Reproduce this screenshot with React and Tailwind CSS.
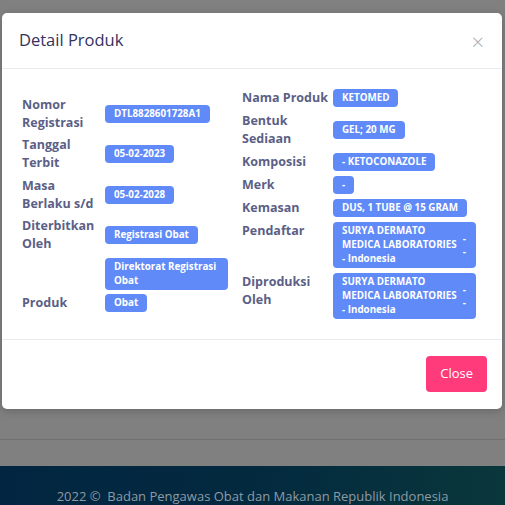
import React from "react";

const font = { fontFamily: '"Open Sans", "Liberation Sans", sans-serif' };

function Badge({ children, wide }) {
  return (
    <span
      className={`inline-block rounded-[4px] bg-[#5f8af7] px-[9px] py-[2px] text-[9.8px] font-bold leading-[14px] text-white ${wide ? "w-full" : ""}`}
    >
      {children}
    </span>
  );
}

function CompanyBadge() {
  return (
    <div className="flex w-full items-center rounded-[4px] bg-[#5f8af7] py-[2px] pl-[9px] pr-[10px] text-[9.8px] font-bold leading-[14px] text-white">
      <div className="flex-1">
        SURYA DERMATO
        <br />
        MEDICA LABORATORIES
        <br />- Indonesia
      </div>
      <div className="flex flex-col leading-[13px]">
        <span>-</span>
        <span>-</span>
      </div>
    </div>
  );
}

function Row({ label, labelWidth, children }) {
  return (
    <div className="flex">
      <div
        className="shrink-0 text-[12.5px] font-bold leading-[18px] text-[#5b5f86]"
        style={{ width: labelWidth }}
      >
        {label}
      </div>
      <div className="flex flex-1 items-center">{children}</div>
    </div>
  );
}

export default function App() {
  return (
    <div className="relative h-[505px] w-[505px] overflow-hidden bg-[#808080]" style={font}>
      {/* page behind the overlay */}
      <div className="flex h-full flex-col">
        <div className="h-[399px]" />
        <div className="pl-[105px] text-[11px] font-bold leading-[12px] text-[#6f6f6f]">Obat</div>
        <div className="mt-[28px] h-px bg-[#707070]" />
        <div className="h-[26px]" />
        <div className="flex flex-1 items-end justify-center bg-gradient-to-r from-[#022641] via-[#03293f] to-[#0a373b] pb-[1px]">
          <span className="text-[13px] leading-[16px] text-[#8e9aa3]">
            2022 ©&nbsp; Badan Pengawas Obat dan Makanan Republik Indonesia
          </span>
        </div>
      </div>

      {/* modal */}
      <div className="absolute left-[2px] top-[13px] w-[500px] rounded-[5px] bg-white shadow-[0_2px_10px_rgba(0,0,0,0.2)]">
        <div className="flex h-[56px] items-center justify-between border-b border-[#e9ecef] pl-[17px] pr-[18px]">
          <h5 className="text-[16.5px] font-medium text-[#32325d]">Detail Produk</h5>
          <span className="text-[22px] font-light leading-none text-[#a9a9b4]">×</span>
        </div>

        <div className="flex h-[271px] items-center border-b border-[#e9ecef] pl-[20px]">
          <div className="flex w-[206px] flex-col gap-[4.5px]">
            <Row label={<>Nomor<br />Registrasi</>} labelWidth={83}>
              <Badge>DTL8828601728A1</Badge>
            </Row>
            <Row label={<>Tanggal<br />Terbit</>} labelWidth={83}>
              <Badge>05-02-2023</Badge>
            </Row>
            <Row label={<>Masa<br />Berlaku s/d</>} labelWidth={83}>
              <Badge>05-02-2028</Badge>
            </Row>
            <Row label={<>Diterbitkan<br />Oleh</>} labelWidth={83}>
              <Badge>Registrasi Obat</Badge>
            </Row>
            <Row label="" labelWidth={83}>
              <Badge wide>
                Direktorat Registrasi
                <br />
                Obat
              </Badge>
            </Row>
            <Row label="Produk" labelWidth={83}>
              <Badge>Obat</Badge>
            </Row>
          </div>

          <div className="ml-[14px] flex w-[234px] flex-col gap-[5px]">
            <Row label="Nama Produk" labelWidth={91}>
              <Badge>KETOMED</Badge>
            </Row>
            <Row label={<>Bentuk<br />Sediaan</>} labelWidth={91}>
              <Badge>GEL; 20 MG</Badge>
            </Row>
            <Row label="Komposisi" labelWidth={91}>
              <Badge>- KETOCONAZOLE</Badge>
            </Row>
            <Row label="Merk" labelWidth={91}>
              <Badge>-</Badge>
            </Row>
            <Row label="Kemasan" labelWidth={91}>
              <Badge>DUS, 1 TUBE @ 15 GRAM</Badge>
            </Row>
            <Row label="Pendaftar" labelWidth={91}>
              <CompanyBadge />
            </Row>
            <Row label={<>Diproduksi<br />Oleh</>} labelWidth={91}>
              <CompanyBadge />
            </Row>
          </div>
        </div>

        <div className="flex h-[69px] items-start justify-end pr-[15px] pt-[16px]">
          <button className="h-[36px] rounded-[4px] bg-[#ff3b7b] px-[14px] text-[13px] font-medium text-white">
            Close
          </button>
        </div>
      </div>
    </div>
  );
}
